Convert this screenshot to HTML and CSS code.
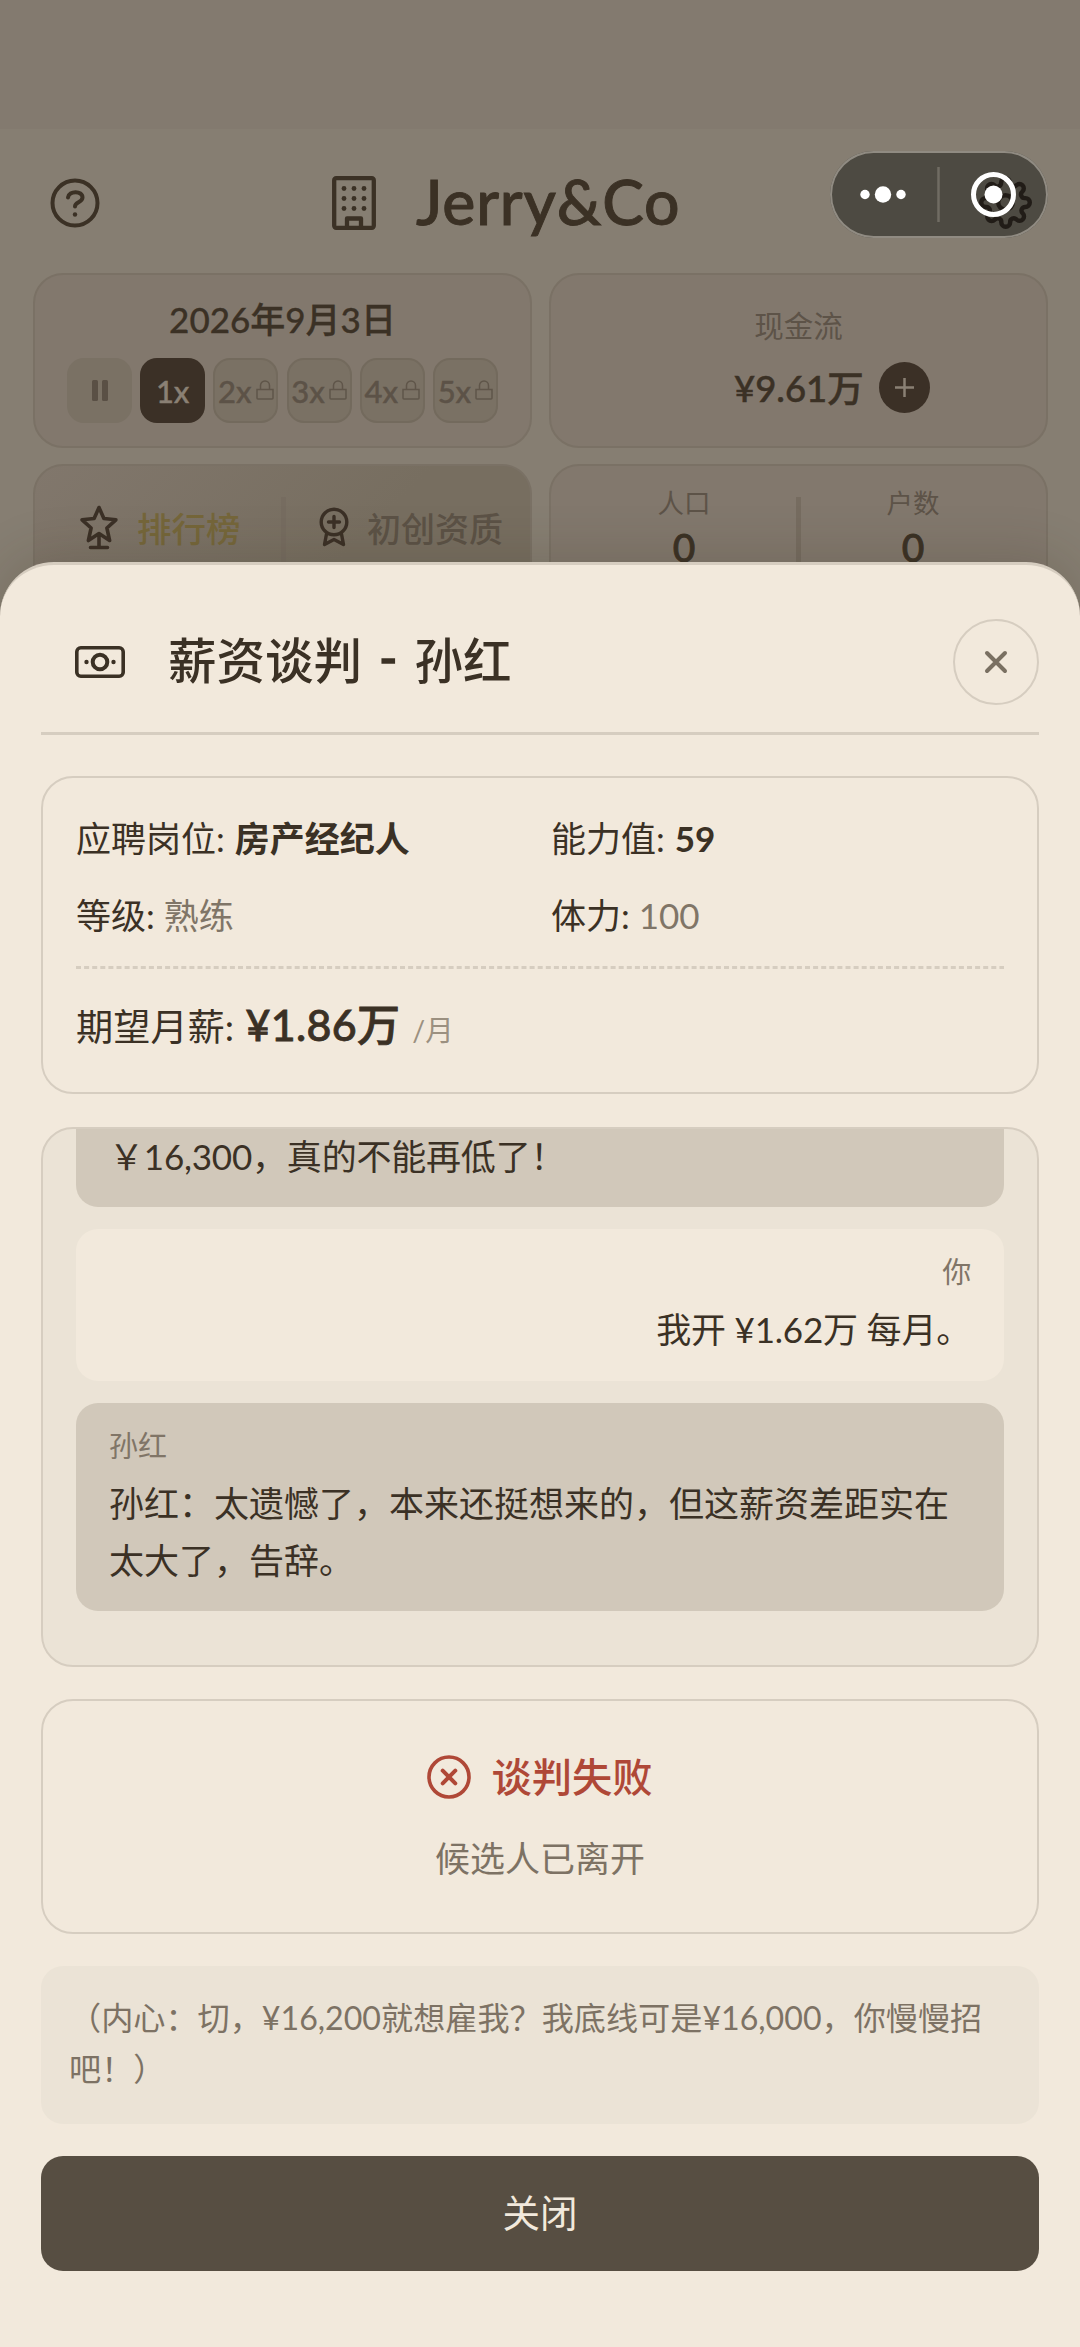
FILE: index.html
```html
<!DOCTYPE html>
<html lang="zh-CN">
<head>
<meta charset="utf-8">
<title>Jerry&amp;Co</title>
<link rel="stylesheet" href="styles.css">
</head>
<body>
<svg class="defs" width="0" height="0">
  <symbol id="lock" viewBox="0 0 18 20"><path d="M1 9.5h16v8.5q0 1-1 1H2q-1 0-1-1zM4.5 9.500V5.500a4.500 4.500 0 0 1 9 0v4" fill="none" stroke="currentColor" stroke-width="1.500"/></symbol>
</svg>
<div class="screen">
  <div class="statusbar"></div>
  <header class="topbar">
    <svg class="help" viewBox="0 0 50 50" fill="none" stroke="currentColor" stroke-width="4" stroke-linecap="round" stroke-linejoin="round"><circle cx="25" cy="25" r="22.500"/><path d="M18 19.500c.8-7 14.500-7.200 14.500 0 0 5-7.500 4.600-7.500 9"/><circle cx="25" cy="36.500" r="2.200" fill="currentColor" stroke="none"/></svg>
    <div class="brand">
      <svg class="building" viewBox="0 0 44 54" fill="none" stroke="currentColor" stroke-width="4.300" stroke-linejoin="round"><rect x="2.200" y="2.200" width="39.600" height="49.600" rx="2"/><path d="M15 51V42.500h14V51"/><g fill="currentColor" stroke="none"><circle cx="12" cy="12.500" r="2.400"/><circle cx="22" cy="12.500" r="2.400"/><circle cx="32" cy="12.500" r="2.400"/><circle cx="12" cy="22.500" r="2.400"/><circle cx="22" cy="22.500" r="2.400"/><circle cx="32" cy="22.500" r="2.400"/><circle cx="12" cy="32.500" r="2.400"/><circle cx="22" cy="32.500" r="2.400"/><circle cx="32" cy="32.500" r="2.400"/></g></svg>
      <h1>Jerry&amp;Co</h1>
    </div>
  </header>
  <main class="stats">
    <section class="card clock">
      <div class="date">2026年9月3日</div>
      <div class="speeds">
        <span class="speed pause"><i></i><i></i></span>
        <span class="speed on">1x</span>
        <span class="speed locked">2x<svg><use href="#lock"/></svg></span>
        <span class="speed locked">3x<svg><use href="#lock"/></svg></span>
        <span class="speed locked">4x<svg><use href="#lock"/></svg></span>
        <span class="speed locked">5x<svg><use href="#lock"/></svg></span>
      </div>
    </section>
    <section class="card cash">
      <div class="label">现金流</div>
      <div class="amount"><b>¥9.61万</b><svg viewBox="0 0 51 51"><circle cx="25.500" cy="25.500" r="25.500" fill="#3b3026"/><path d="M16 25.500h19M25.500 16v19" stroke="#8a8074" stroke-width="2.500"/></svg></div>
    </section>
    <section class="card links">
      <div class="link rank"><svg viewBox="0 0 40 46" fill="none" stroke="currentColor" stroke-width="3.600" stroke-linejoin="round" stroke-linecap="round"><path d="M20 3.500l4.900 11 12 1.300-9 8.200 2.700 12.500L20 29.500 9.400 36.500l2.700-12.500-9-8.200 12-1.300zM20 30v13M11.500 43.500h17"/></svg>排行榜</div>
      <div class="bar"></div>
      <div class="link level"><svg viewBox="0 0 30 40" fill="none" stroke="currentColor" stroke-width="3.400" stroke-linejoin="round" stroke-linecap="round"><circle cx="15" cy="15" r="12.800"/><path d="M15 9.500v11M9.500 15h11M7.500 27L5.500 37.500l9.500-5 9.500 5-2-10.500"/></svg>初创资质</div>
    </section>
    <section class="card people">
      <div class="stat"><span>人口</span><b>0</b></div>
      <div class="bar"></div>
      <div class="stat"><span>户数</span><b>0</b></div>
    </section>
  </main>

  <svg class="gear" viewBox="0 0 24 24" fill="none" stroke="#211c17" stroke-width="2" stroke-linejoin="round"><circle cx="12" cy="12" r="3.300"/><path d="M19.400 15a1.650 1.650 0 0 0 .33 1.820l.06.06a2 2 0 1 1-2.830 2.830l-.06-.06a1.650 1.650 0 0 0-2.800 1.170V21a2 2 0 0 1-4 0v-.09a1.650 1.650 0 0 0-2.900-1.200l-.06.06a2 2 0 1 1-2.830-2.830l.06-.06A1.650 1.650 0 0 0 3.200 14H3a2 2 0 0 1 0-4h.09a1.650 1.650 0 0 0 1.200-2.900l-.06-.06a2 2 0 1 1 2.830-2.830l.06.06A1.650 1.650 0 0 0 10 3.100V3a2 2 0 0 1 4 0v.09a1.650 1.650 0 0 0 2.800 1.170l.06-.06a2 2 0 1 1 2.830 2.830l-.06.06A1.650 1.650 0 0 0 20.900 10H21a2 2 0 0 1 0 4h-.09a1.650 1.650 0 0 0-1.510 1z"/></svg>
  <div class="capsule">
    <svg viewBox="0 0 218 87"><g fill="#fff"><circle cx="35" cy="43.500" r="4.700"/><circle cx="53" cy="43.500" r="8.200"/><circle cx="71" cy="43.500" r="4.700"/><circle cx="163.500" cy="43.500" r="9"/></g><path d="M108.500 16v55" stroke="#706c63" stroke-width="2.500"/><circle cx="163.500" cy="43.500" r="20" fill="none" stroke="#fff" stroke-width="5"/></svg>
  </div>

  <div class="sheet">
    <header class="sheet-head">
      <svg class="bill" viewBox="0 0 50 32" fill="none" stroke="currentColor" stroke-width="3.600"><rect x="1.800" y="1.800" width="46.400" height="28.400" rx="4"/><circle cx="25" cy="16" r="7.300" stroke-width="4"/><g fill="currentColor" stroke="none"><circle cx="11.500" cy="16" r="2.200"/><circle cx="38.500" cy="16" r="2.200"/></g></svg>
      <h2>薪资谈判 <span class="dash">-</span> 孙红</h2>
      <span class="close"><svg viewBox="0 0 24 24"><path d="M3 3l18 18M21 3L3 21" stroke="#7a7062" stroke-width="4" stroke-linecap="round"/></svg></span>
    </header>
    <section class="panel info">
      <div class="grid">
        <div>应聘岗位: <b>房产经纪人</b></div><div>能力值: <b>59</b></div>
        <div>等级: <em>熟练</em></div><div>体力: <em>100</em></div>
      </div>
      <svg class="dashes" viewBox="0 0 928 3"><path d="M0 1.500h928" stroke="#d6cdc0" stroke-width="3" stroke-dasharray="5 3.100"/></svg>
      <div class="salary">期望月薪: <b>¥1.86万</b><small>/月</small></div>
    </section>
    <section class="panel chat">
      <div class="bubble cut">￥16,300，真的不能再低了！</div>
      <div class="bubble mine"><div class="who">你</div>我开 ¥1.62万 每月。</div>
      <div class="bubble"><div class="who">孙红</div>孙红：太遗憾了，本来还挺想来的，但这薪资差距实在太大了，告辞。</div>
    </section>
    <section class="panel result">
      <div class="fail"><svg viewBox="0 0 44 44" fill="none" stroke="currentColor" stroke-linecap="round"><circle cx="22" cy="22" r="20" stroke-width="3.600"/><path d="M15.700 15.700l12.600 12.600M28.300 15.700L15.700 28.300" stroke-width="4"/></svg>谈判失败</div>
      <div class="left">候选人已离开</div>
    </section>
    <section class="thought">（内心：切，¥16,200就想雇我？我底线可是¥16,000，你慢慢招吧！）</section>
    <div class="button">关闭</div>
  </div>
</div>
</body>
</html>
```
FILE: styles.css
```css
* { box-sizing: border-box; }
body {
  margin: 0;
  font-family: Lato, "Noto Sans CJK SC", sans-serif;
  color: #3b3125;
  text-spacing-trim: space-all;
}
svg { display: block; flex: none; }
h1, h2 { margin: 0; font-weight: 500; }
b { font-weight: 500; }
em { font-style: normal; color: #807567; }
.defs { position: absolute; }
.screen {
  position: relative;
  width: 1080px;
  height: 2347px;
  overflow: hidden;
  background: #867e72;
}
.statusbar { height: 129px; background: #837a6f; }

.topbar {
  display: flex;
  align-items: center;
  height: 144px;
  padding: 3px 50px 0;
}
.help { width: 50px; height: 50px; }
.brand { display: flex; align-items: center; margin-left: 232px; gap: 40px; }
.building { width: 44px; height: 54px; }
.brand h1 { margin-top: -3px; font-size: 62.500px; line-height: 70px; letter-spacing: .8px; -webkit-text-stroke: .9px; }

.stats {
  display: grid;
  grid-template-columns: 499px 499px;
  grid-template-rows: 175px 175px;
  gap: 16px 17px;
  padding-left: 33px;
}
.card { border: 2.500px solid #7a7165; border-radius: 30px; background: #82786d; }
.date { margin-top: 24px; line-height: 40px; font-size: 35px; font-weight: 500; text-align: center; -webkit-text-stroke: .3px; }
.speeds { display: flex; gap: 8.200px; margin: 19px 0 0 32px; }
.speed {
  display: flex;
  flex: none;
  align-items: center;
  justify-content: center;
  width: 65px;
  height: 65px;
  border-radius: 17px;
  background: #7a7164;
  font-size: 31px;
  font-weight: 500;
  -webkit-text-stroke: .4px;
}
.pause { gap: 4px; }
.pause i { width: 6px; height: 21px; border-radius: 1.500px; background: #5a5045; }
.on { background: #3b3026; color: #8a8074; }
.locked { gap: 4px; border: 2.500px solid #736a5d; color: #5c5247; }
.locked svg { width: 18px; height: 20px; color: #5f5549; margin-top: -1px; }
.cash .label { margin-top: 31px; line-height: 40px; font-size: 29.500px; color: #5d5348; text-align: center; }
.amount { display: flex; align-items: center; margin: 16px 0 0 183px; gap: 16px; }
.amount b { margin-top: -3px; font-size: 36.500px; width: 129px; white-space: nowrap; -webkit-text-stroke: .5px; }
.amount svg { width: 51px; height: 51px; }
.links { display: flex; background: linear-gradient(135deg, #81776c, #776e60 60%); }
.link { display: flex; height: 66px; margin-top: 28px; align-items: center; font-size: 34.500px; font-weight: 500; }
.link svg { color: #3b3026; }
.rank { width: 246px; padding-left: 44px; gap: 18px; color: #75663a; }
.rank svg { width: 40px; height: 46px; }
.level { padding-left: 33px; gap: 18px; color: #5c5246; font-size: 34px; }
.level svg { width: 30px; height: 40px; }
.bar { width: 5px; height: 120px; margin-top: 31px; background: #766c60; }
.people { display: flex; justify-content: center; }
.stat { display: flex; flex-direction: column; align-items: center; width: 224px; padding-top: 19px; }
.stat span { font-size: 26.500px; line-height: 36px; color: #5d5348; }
.stat b { font-size: 39px; line-height: 52px; -webkit-text-stroke: .8px; }

.gear { position: absolute; left: 979px; top: 176px; width: 53px; height: 53px; z-index: 2; }
.capsule {
  position: absolute;
  left: 830px;
  top: 151px;
  width: 218px;
  height: 87px;
  border-radius: 44px;
  background: #4d4a42;
  box-shadow: inset 0 0 0 2px #908b82;
}
.capsule svg { position: relative; z-index: 3; width: 218px; height: 87px; }

.sheet {
  position: absolute;
  left: 0;
  right: 0;
  top: 562px;
  bottom: 0;
  padding: 0 41px;
  border-top: 3px solid #d6cdc0;
  border-radius: 54px 54px 0 0;
  background: #f2e9dc;
  box-shadow: 0 -8px 50px rgba(50, 40, 25, .17);
}
.sheet-head {
  display: flex;
  align-items: center;
  height: 170px;
  padding: 54px 0 27px 34px;
  border-bottom: 3px solid #d6cdc0;
}
.bill { width: 50px; height: 32px; }
h2 { margin: -4px 0 0 43px; font-size: 48.500px; line-height: 60px; white-space: pre; }
.dash { display: inline-block; width: 28px; line-height: 50px; text-align: center; vertical-align: 3px; -webkit-text-stroke: 1.500px; }
.close {
  display: flex;
  align-items: center;
  justify-content: center;
  width: 86px;
  height: 86px;
  margin-left: auto;
  border: 2.500px solid #d6cdc0;
  border-radius: 50%;
}
.close svg { width: 24px; height: 24px; }
.panel { border: 2.500px solid #d6cdc0; border-radius: 32px; }
.info { height: 318px; margin-top: 41px; padding: 22px 33px 0; font-size: 35px; }
.grid { display: grid; grid-template-columns: 475px 1fr; line-height: 77px; }
.grid b { margin-left: 1px; font-weight: 700; }
.dashes { width: 928px; height: 3px; margin-top: 12px; }
.salary { padding-top: 6px; font-size: 37.200px; line-height: 100px; }
.salary b { margin-left: 2px; font-size: 43px; letter-spacing: .3px; -webkit-text-stroke: .8px; }
.salary small { margin-left: 12px; font-size: 28.500px; color: #9b9080; }
.chat {
  display: flex;
  flex-direction: column;
  justify-content: flex-end;
  height: 540px;
  margin-top: 33px;
  padding: 0 33px 54px;
  overflow: hidden;
  background: #ebe3d6;
}
.bubble {
  flex: none;
  margin-top: 22px;
  padding: 19px 33px 22px;
  border-radius: 22px;
  background: #d1c8ba;
  font-size: 35px;
  line-height: 57px;
}
.cut { margin: 0; padding-top: 0; border-radius: 0 0 22px 22px; letter-spacing: -.2px; }
.mine { padding-bottom: 23px; background: #f2e9dc; text-align: right; letter-spacing: -.2px; }
.who { margin-bottom: 6px; font-size: 29px; line-height: 47px; color: #807567; }
.result { height: 235px; margin-top: 32px; padding-top: 50px; text-align: center; }
.fail { display: flex; justify-content: center; align-items: center; gap: 20px; font-size: 40.300px; font-weight: 500; line-height: 52px; color: #af4837; }
.fail svg { width: 44px; height: 44px; }
.left { margin-top: 30px; font-size: 35px; line-height: 50px; color: #7d7264; }
.thought {
  height: 158px;
  margin-top: 32px;
  padding: 26px 28px;
  border-radius: 22px;
  background: #ebe3d6;
  font-size: 32.150px;
  line-height: 51px;
  color: #7d7264;
}
.button {
  height: 115px;
  margin-top: 32px;
  border-radius: 22px;
  background: #574e42;
  color: #f2e9dc;
  font-size: 37.500px;
  line-height: 113px;
  text-align: center;
}
```
